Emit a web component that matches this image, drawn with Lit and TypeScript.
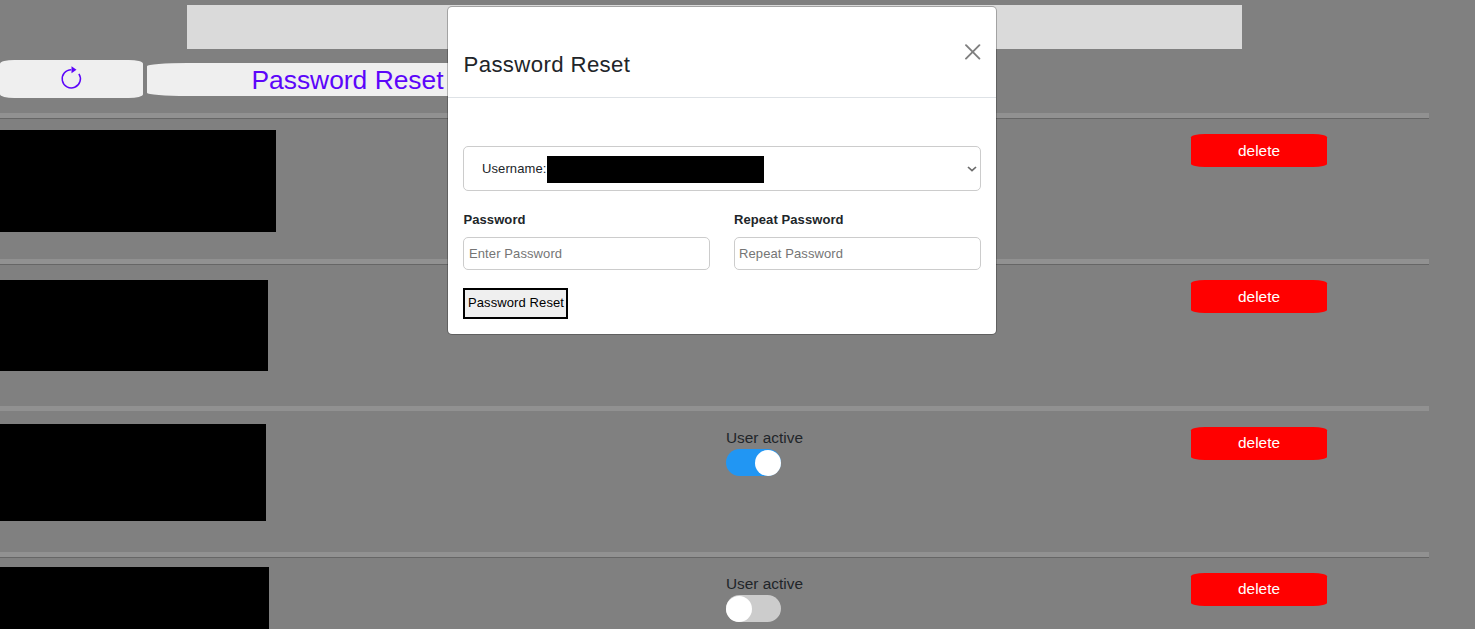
import { LitElement, html, css, nothing } from "lit";
import { customElement, property } from "lit/decorators.js";
import { classMap } from "lit/directives/class-map.js";
import { styleMap } from "lit/directives/style-map.js";

interface UserRow {
  height: number;
  rule: boolean;
  top: number;
  maskWidth: number;
  maskHeight: number;
  active?: boolean;
}

const ROWS: UserRow[] = [
  { height: 146, rule: true, top: 11, maskWidth: 276, maskHeight: 102 },
  { height: 147, rule: true, top: 15, maskWidth: 268, maskHeight: 91 },
  { height: 146, rule: false, top: 12, maskWidth: 266, maskHeight: 97, active: true },
  { height: 147, rule: true, top: 9, maskWidth: 269, maskHeight: 97, active: false },
];

@customElement("user-switch")
class UserSwitch extends LitElement {
  @property({ type: Boolean }) on = false;

  static styles = css`
    :host { display: block; }
    .label { font-size: 15.4px; line-height: 22px; height: 22px; color: #212529; white-space: nowrap; }
    .track { display: flex; box-sizing: border-box; width: 55px; height: 27px; border-radius: 14px; background: #ccc; align-items: center; }
    .track.on { background: #2196f3; justify-content: flex-end; }
    .knob { width: 26px; height: 26px; border-radius: 50%; background: #fff; }
  `;

  render() {
    return html`<div class="label">User active</div>
      <div class=${classMap({ track: true, on: this.on })}><div class="knob"></div></div>`;
  }
}

@customElement("reset-dialog")
class ResetDialog extends LitElement {
  static styles = css`
    :host { display: block; box-sizing: border-box; width: 550px; height: 329px; background: #fff; background-clip: padding-box; border: 1px solid rgba(0, 0, 0, 0.25); border-radius: 5px; color: #212529; }
    .head { display: flex; box-sizing: border-box; height: 91px; padding: 0 15px; justify-content: space-between; border-bottom: 1px solid #dee2e6; }
    .title { margin: 44px 0 0 0.5px; font-size: 22.2px; font-weight: 400; line-height: 28px; letter-spacing: 0.38px; }
    .close { display: block; width: 16px; height: 16px; margin-top: 36.5px; }
    .body { padding: 48px 15px 0; font-size: 13px; }
    .select { display: flex; box-sizing: border-box; height: 45px; border: 1px solid #ccc; border-radius: 5px; padding: 0 3px 0 18px; align-items: center; letter-spacing: 0.1px; color: #212529; }
    .name { width: 64px; white-space: nowrap; }
    .mask { width: 217px; height: 27px; background: #000; margin-left: 1px; margin-top: 2px; }
    .arrow { margin-left: auto; width: 10px; height: 6px; }
    .fields { display: grid; grid-template-columns: 247px 247px; column-gap: 24px; margin-top: 18px; }
    .field { display: flex; flex-direction: column; }
    .field label { box-sizing: border-box; height: 28px; padding: 1px 0 0 0.5px; line-height: 20px; font-weight: 700; letter-spacing: 0.08px; }
    .field:last-child label { padding-left: 0; }
    .field input { box-sizing: border-box; width: 247px; height: 33px; margin: 0; padding: 0 5px; border: 1px solid #ccc; border-radius: 5px; font: 13px "Liberation Sans", Arial, sans-serif; letter-spacing: 0.1px; background: #fff; }
    .field:last-child input { padding-left: 4px; }
    input::placeholder { color: #757575; opacity: 1; }
    .submit { display: block; box-sizing: border-box; width: 105px; height: 31px; margin: 18px 0 0; padding: 0 0 2px 1px; border: 2px solid #000; background: #efefef; color: #000; font: 13px "Liberation Sans", Arial, sans-serif; letter-spacing: 0.1px; white-space: nowrap; }
  `;

  render() {
    return html`
      <div class="head">
        <h5 class="title">Password Reset</h5>
        <svg class="close" viewBox="0 0 16 16"><path d="M1 1.2 14.4 14.6M14.4 1.2 1 14.6" fill="none" stroke="#7f7f7f" stroke-width="1.9" stroke-linecap="round" /></svg>
      </div>
      <div class="body">
        <div class="select">
          <span class="name">Username:</span><span class="mask"></span>
          <svg class="arrow" viewBox="0 0 10 6"><path d="M1 1 5 4.7 9 1" fill="none" stroke="#6b6b6b" stroke-width="1.7" /></svg>
        </div>
        <div class="fields">
          <div class="field"><label>Password</label><input type="password" placeholder="Enter Password" /></div>
          <div class="field"><label>Repeat Password</label><input type="password" placeholder="Repeat Password" /></div>
        </div>
        <button class="submit">Password Reset</button>
      </div>`;
  }
}

@customElement("app-root")
class AppRoot extends LitElement {
  static styles = css`
    :host { display: block; position: relative; width: 1475px; height: 629px; overflow: hidden; background: #808080; font-family: "Liberation Sans", Arial, sans-serif; }
    .header { box-sizing: border-box; height: 113px; padding-top: 5px; }
    .banner { width: 1055px; height: 44px; margin-left: 187px; background: #dadada; }
    .toolbar { display: flex; align-items: center; gap: 4px; margin-top: 11px; height: 38px; }
    .toolbar button { display: flex; box-sizing: border-box; align-items: center; justify-content: center; margin: 0; padding: 0; border: 0; border-radius: 10%; background: #efefef; color: #5c05fa; }
    .toolbar .refresh { width: 143px; height: 38px; }
    .refresh svg { width: 26px; height: 26px; }
    .toolbar .reset { width: 402px; height: 33px; margin-top: 1px; padding: 2px 1px 0 0; font: 26.4px "Liberation Sans", Arial, sans-serif; }
    .row { display: flex; flex-direction: column; width: 1429px; }
    .line { flex: none; height: 5px; background: #919191; border-bottom: 1px solid #666; }
    .line.plain { border-bottom-color: transparent; background-clip: padding-box; }
    .cells { display: grid; grid-template-columns: 726px 465px 136px; align-items: start; }
    .mask { background: #000; }
    .status { padding-top: 15px; }
    .delete { width: 136px; height: 33px; margin: 15px 0 0; padding: 0; border: 0; border-radius: 10%; background: #f00; color: #fff; font: 15.4px "Liberation Sans", Arial, sans-serif; }
    .delete.raised { padding-bottom: 2px; }
    .modal { position: absolute; left: 447px; top: 6px; }
  `;

  render() {
    return html`
      <div class="header">
        <div class="banner"></div>
        <div class="toolbar">
          <button class="refresh" aria-label="Refresh">
            <svg viewBox="0 0 26 26"><path d="M12.3 3.7A9.1 9.1 0 1 0 19.9 7.8" fill="none" stroke="currentColor" stroke-width="1.5" /><path d="M12.5 0.2V7.2L17.5 3.7Z" fill="currentColor" /></svg>
          </button>
          <button class="reset">Password Reset</button>
        </div>
      </div>
      ${ROWS.map((r) => html`
        <div class="row" style=${styleMap({ height: `${r.height}px` })}>
          <div class=${classMap({ line: true, plain: !r.rule })}></div>
          <div class="cells">
            <div class="mask" style=${styleMap({ width: `${r.maskWidth}px`, height: `${r.maskHeight}px`, marginTop: `${r.top}px` })}></div>
            <div class="status">${r.active === undefined ? nothing : html`<user-switch ?on=${r.active}></user-switch>`}</div>
            <button class=${classMap({ delete: true, raised: r.active !== undefined })}>delete</button>
          </div>
        </div>`)}
      <reset-dialog class="modal" role="dialog"></reset-dialog>`;
  }
}
